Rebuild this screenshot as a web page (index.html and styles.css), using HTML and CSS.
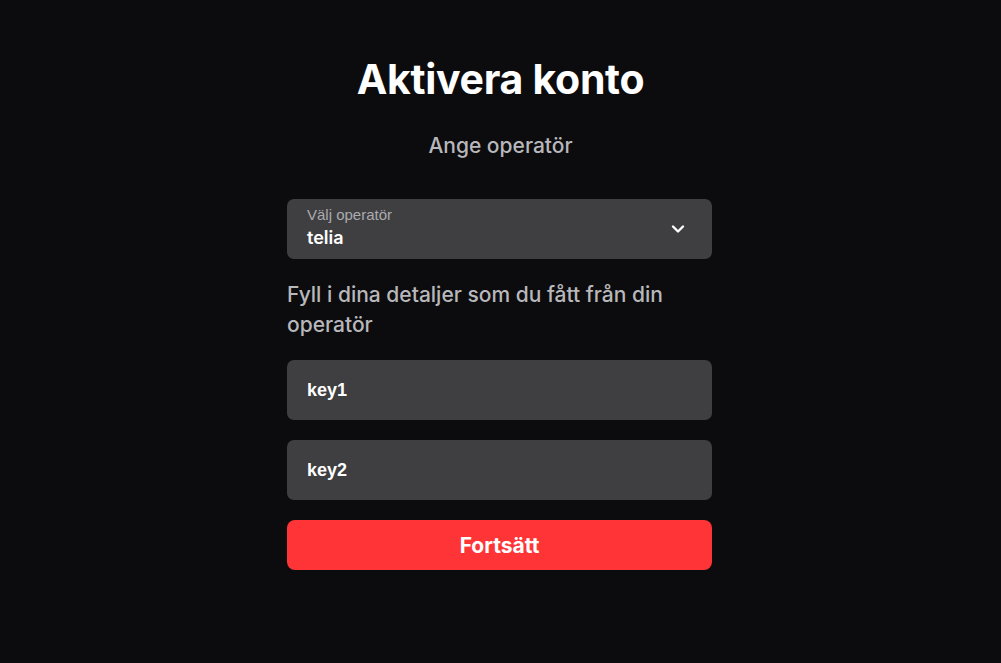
FILE: index.html
```html
<!DOCTYPE html>
<html lang="sv">
<head>
<meta charset="utf-8">
<title>Aktivera konto</title>
<link rel="stylesheet" href="styles.css">
</head>
<body>
<main class="page">
  <h1 class="title">Aktivera konto</h1>
  <p class="subtitle">Ange operatör</p>
  <form class="form">
    <div class="select">
      <div class="select-text">
        <span class="select-label">Välj operatör</span>
        <span class="select-value">telia</span>
      </div>
      <svg class="chevron" width="16" height="16" viewBox="0 0 16 16"><path d="M3 5.5 L8 10.5 L13 5.5" fill="none" stroke="#ffffff" stroke-width="2.4" stroke-linecap="round" stroke-linejoin="round"/></svg>
    </div>
    <p class="hint">Fyll i dina detaljer som du fått från din operatör</p>
    <div class="field">key1</div>
    <div class="field">key2</div>
    <button type="button" class="btn">Fortsätt</button>
  </form>
</main>
</body>
</html>
```
FILE: styles.css
```css
html, body {
  margin: 0;
  padding: 0;
  background: #0c0c0e;
  height: 100%;
}
body {
  font-family: "Inter", "Noto Sans", sans-serif;
  color: #ffffff;
}
.page {
  display: flex;
  flex-direction: column;
  align-items: center;
  padding-top: 55px;
}
.title {
  margin: 0;
  font-size: 41px;
  font-weight: 700;
  line-height: 48px;
  letter-spacing: -0.3px;
}
.subtitle {
  margin: 31px 0 0;
  font-size: 21px;
  line-height: 24px;
  color: #b8b8bc;
  font-weight: 500;
}
.form {
  width: 425px;
  display: flex;
  flex-direction: column;
  margin-top: 41px;
  margin-right: 2px;
}
.select {
  height: 60px;
  background: #3f3f41;
  border-radius: 7px;
  display: flex;
  align-items: center;
  justify-content: space-between;
  padding: 0 26px 0 20px;
  box-sizing: border-box;
}
.select-text {
  display: flex;
  flex-direction: column;
}
.select-label {
  font-family: "Liberation Sans", Arial, sans-serif;
  font-size: 15px;
  line-height: 16px;
  color: #ababaf;
  margin-top: -2px;
}
.select-value {
  font-size: 18px;
  line-height: 22px;
  font-weight: 600;
  color: #ffffff;
  margin-top: 4px;
}
.chevron {
  display: block;
}
.hint {
  margin: 21px 0 0;
  font-size: 21px;
  line-height: 30px;
  color: #b8b8bc;
  font-weight: 500;
}
.field {
  height: 60px;
  margin-top: 20px;
  background: #3f3f41;
  border-radius: 7px;
  display: flex;
  align-items: center;
  padding: 0 20px;
  font-family: "Liberation Sans", Arial, sans-serif;
  font-weight: 700;
  font-size: 18px;
  color: #ffffff;
}
.btn {
  margin-top: 20px;
  height: 50px;
  border: none;
  border-radius: 8px;
  background: #ff3437;
  color: #ffffff;
  font-family: "Inter", "Noto Sans", sans-serif;
  font-size: 21px;
  font-weight: 700;
  cursor: pointer;
}
```
